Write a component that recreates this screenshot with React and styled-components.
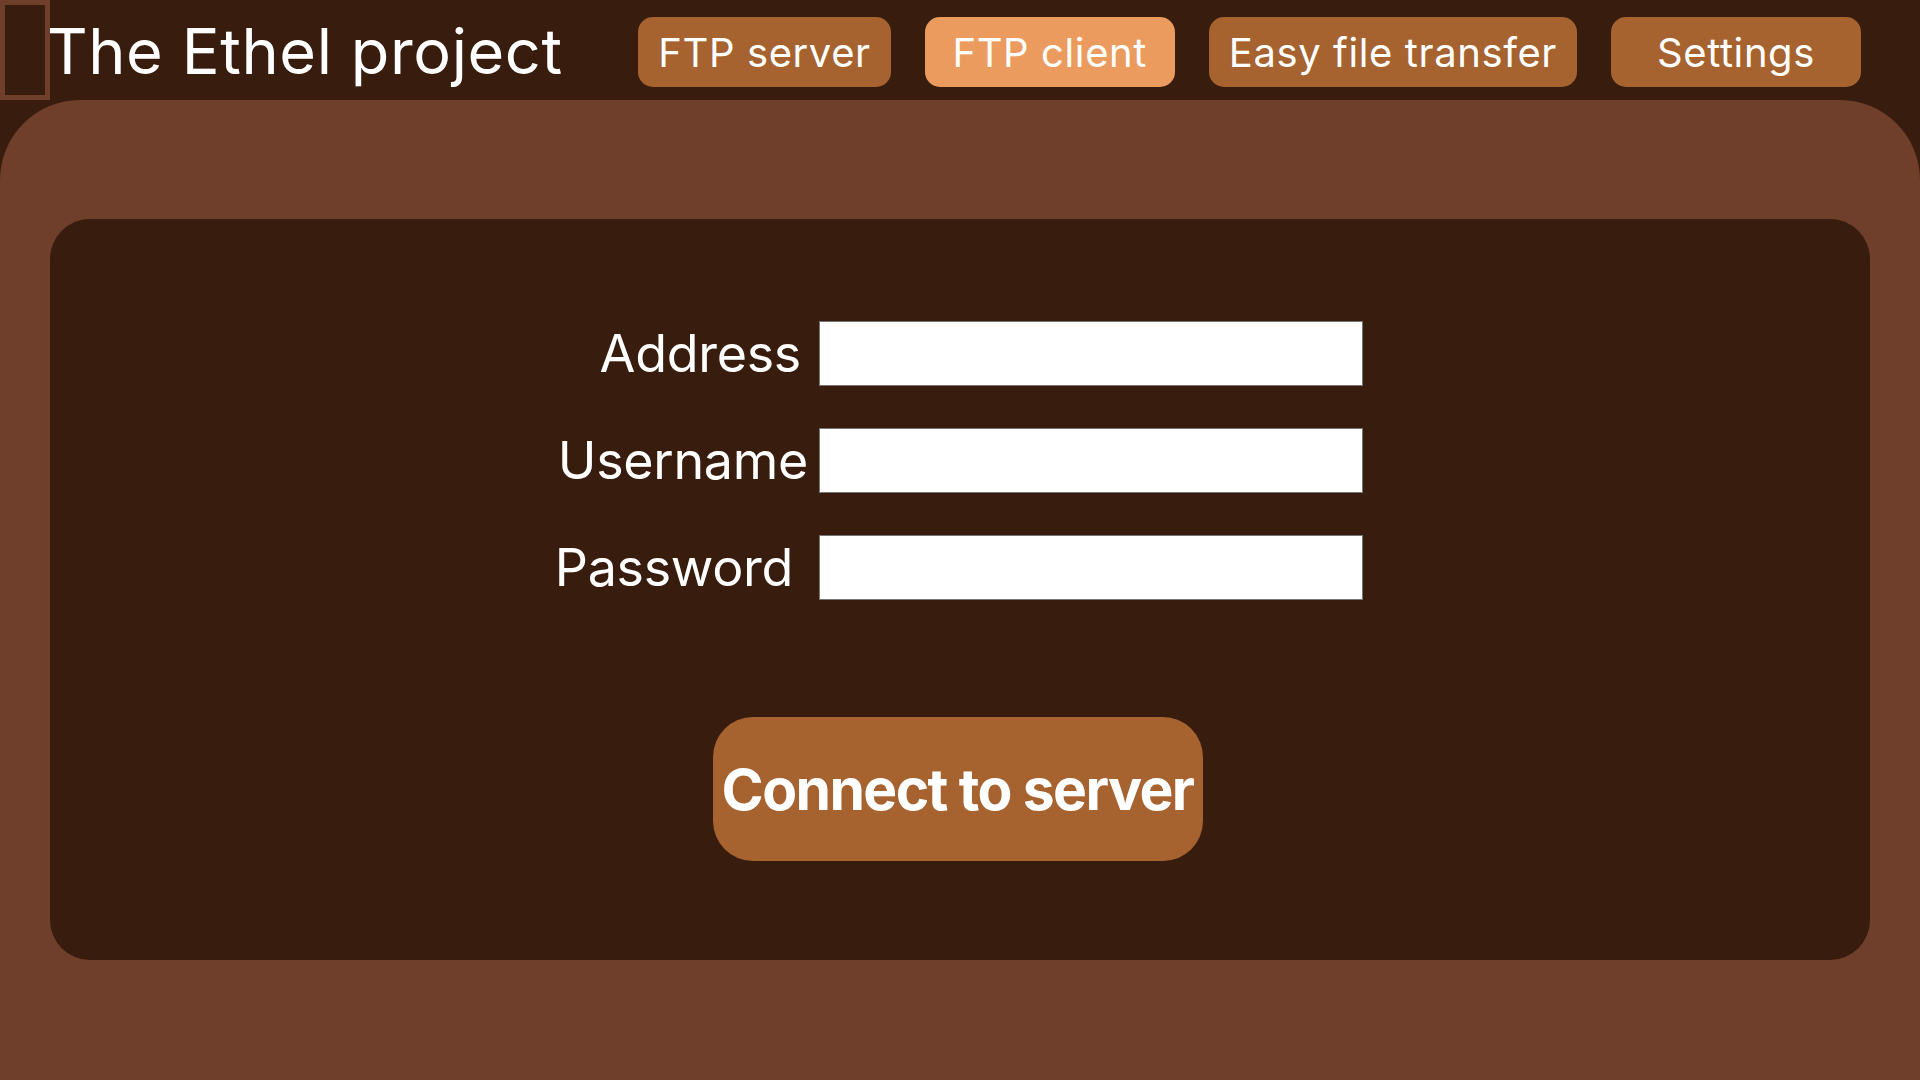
import React from "react";
import styled, { createGlobalStyle } from "styled-components";

const GlobalStyle = createGlobalStyle`
*{
    box-sizing:border-box;
    margin:0;
    padding:0;
}
body{
    background:#381d0f;
    font-family:Inter, "Open Sans", sans-serif;
    color:#fff;
}
`

const Page = styled.div`
display:flex;
flex-direction:column;
min-height:100vh;
background:#381d0f;
`

const Header = styled.header`
display:flex;
align-items:flex-start;
height:100px;
padding-right:59px;
`

const Logo = styled.div`
width:50px;
height:100px;
border:5px solid #6f3f2b;
background:#381d0f;
`

const Title = styled.h1`
font-size:63px;
font-weight:400;
line-height:100px;
margin:1px 0 0 -3px;
letter-spacing:0.6px;
white-space:nowrap;
`

const Nav = styled.nav`
display:flex;
gap:34px;
margin-left:auto;
padding-top:17px;
`

const NavButton = styled.button`
height:70px;
min-width:250px;
padding:0 20px;
border:none;
border-radius:15px;
background:${p => (p.active ? "#eb9b5e" : "#a6622f")};
color:#fff;
font-family:inherit;
font-size:40px;
font-weight:400;
letter-spacing:0.6px;
display:flex;
align-items:center;
justify-content:center;
white-space:nowrap;
cursor:pointer;
`

const Main = styled.main`
flex:1;
background:#6f3f2b;
border-radius:80px 80px 0 0;
padding:119px 50px 120px;
`

const Card = styled.section`
background:#381d0f;
border-radius:40px;
padding:102px 0 99px;
display:flex;
flex-direction:column;
align-items:center;
`

const Form = styled.div`
display:grid;
grid-template-columns:262px 544px;
row-gap:42px;
align-items:center;
`

const Label = styled.label`
justify-self:end;
font-size:52px;
font-weight:400;
letter-spacing:-0.3px;
padding-right:${p => p.pr}px;
white-space:nowrap;
`

const Input = styled.input`
width:544px;
height:65px;
border:1px solid #767676;
background:#fff;
font-size:30px;
padding:0 10px;
`

const Connect = styled.button`
margin-top:117px;
margin-right:5px;
width:490px;
height:144px;
border:none;
border-radius:40px;
background:#a6622f;
color:#fff;
font-family:inherit;
font-size:57px;
font-weight:700;
letter-spacing:-1.6px;
cursor:pointer;
`

const tabs = [
    { name: "FTP server" },
    { name: "FTP client", active: true },
    { name: "Easy file transfer" },
    { name: "Settings" },
]

const fields = [
    { name: "Address", pr: 18, type: "text" },
    { name: "Username", pr: 11, type: "text" },
    { name: "Password", pr: 26, type: "password" },
]

export default function App() {
    return (
        <Page>
            <GlobalStyle />
            <Header>
                <Logo />
                <Title>The Ethel project</Title>
                <Nav>
                    {tabs.map(t => (
                        <NavButton key={t.name} active={t.active}>{t.name}</NavButton>
                    ))}
                </Nav>
            </Header>
            <Main>
                <Card>
                    <Form>
                        {fields.map(f => (
                            <React.Fragment key={f.name}>
                                <Label pr={f.pr}>{f.name}</Label>
                                <Input type={f.type} />
                            </React.Fragment>
                        ))}
                    </Form>
                    <Connect>Connect to server</Connect>
                </Card>
            </Main>
        </Page>
    )
}
